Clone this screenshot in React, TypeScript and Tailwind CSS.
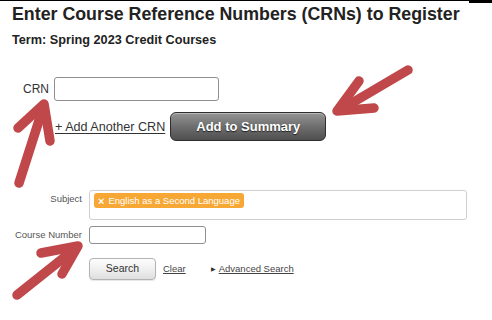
export default function App() {
  return (
    <div className="relative w-[492px] h-[320px] overflow-hidden bg-white" style={{ fontFamily: '"Liberation Sans", Arial, sans-serif' }}>
      <div className="flex items-start">
        <div className="flex-1 h-[1px] bg-black" />
        <div className="w-[23px] h-[3px] bg-black" />
      </div>

      <h1 className="pl-[12px] pt-[1px] text-[17.8px] leading-[21px] font-bold text-[#222]">
        Enter Course Reference Numbers (CRNs) to Register
      </h1>
      <div className="pl-[12px] mt-[8px] text-[12.7px] leading-[15px] font-bold text-[#222]">
        Term: Spring 2023 Credit Courses
      </div>

      <div className="flex items-center gap-[5px] pl-[23px] mt-[29px]">
        <label className="text-[12px] text-[#333]">CRN</label>
        <input className="w-[165px] h-[24px] rounded-[3px] border border-[#8f8f8f] bg-white" />
      </div>

      <div className="flex items-center gap-[5px] pl-[55px] mt-[11px]">
        <a className="text-[12.6px] leading-[16px] text-[#333] underline underline-offset-2">+ Add Another CRN</a>
        <button
          className="w-[156px] h-[29px] rounded-[6px] border border-[#2e2e2e] text-white font-bold text-[13px] shadow-[inset_0_1px_0_rgba(255,255,255,0.35)]"
          style={{ background: "linear-gradient(180deg, #959595 0%, #6e6e6e 50%, #4f4f4f 100%)", textShadow: "0 1px 1px rgba(0,0,0,0.7)" }}
        >
          Add to Summary
        </button>
      </div>

      <div className="grid grid-cols-[82px_1fr] gap-x-[7px] mt-[49px] pr-[25px] text-[9.5px] text-[#555]">
        <div className="text-right pt-[3px] leading-[12px]">Subject</div>
        <div className="h-[30px] rounded-[3px] border border-[#cfcfcf] px-[4px] pt-[2px]">
          <span className="inline-flex items-center gap-[4px] h-[15px] px-[4px] rounded-[3px] bg-[#f7a733] text-white leading-[12px]">
            <span className="font-bold text-[11px]">×</span>
            English as a Second Language
          </span>
        </div>

        <div className="text-right self-center leading-[12px] mt-[6px]">Course Number</div>
        <div className="mt-[6px]">
          <input className="w-[117px] h-[18px] rounded-[3px] border border-[#8f8f8f] bg-white block" />
        </div>

        <div />
        <div className="flex items-center mt-[14px]">
          <button
            className="w-[67px] h-[22px] rounded-[4px] border border-[#b3b3b3] text-[10.5px] text-[#333] shadow-[0_1px_1px_rgba(0,0,0,0.1)]"
            style={{ background: "linear-gradient(180deg, #fdfdfd 0%, #f0f0f0 50%, #dedede 100%)" }}
          >
            Search
          </button>
          <a className="ml-[7px] text-[9.5px] text-[#444] underline">Clear</a>
          <span className="ml-[25px] text-[6px] text-[#333]">▶</span>
          <a className="ml-[3px] text-[9.5px] text-[#444] underline">Advanced Search</a>
        </div>
      </div>

      <svg className="absolute inset-0 pointer-events-none" width="492" height="320" viewBox="0 0 492 320">
        <g stroke="#c0474a" strokeWidth="9.5" strokeLinecap="round" strokeLinejoin="round" fill="none">
          <path d="M19 183 L43 108" />
          <path d="M18 128 L44 104 L50 141" />
          <path d="M408 70 L340 110" />
          <path d="M359 81 L337 111 L374 108" />
          <path d="M17 295 L76 248" />
          <path d="M41 253 L78 246 L62 274" />
        </g>
      </svg>
    </div>
  );
}
